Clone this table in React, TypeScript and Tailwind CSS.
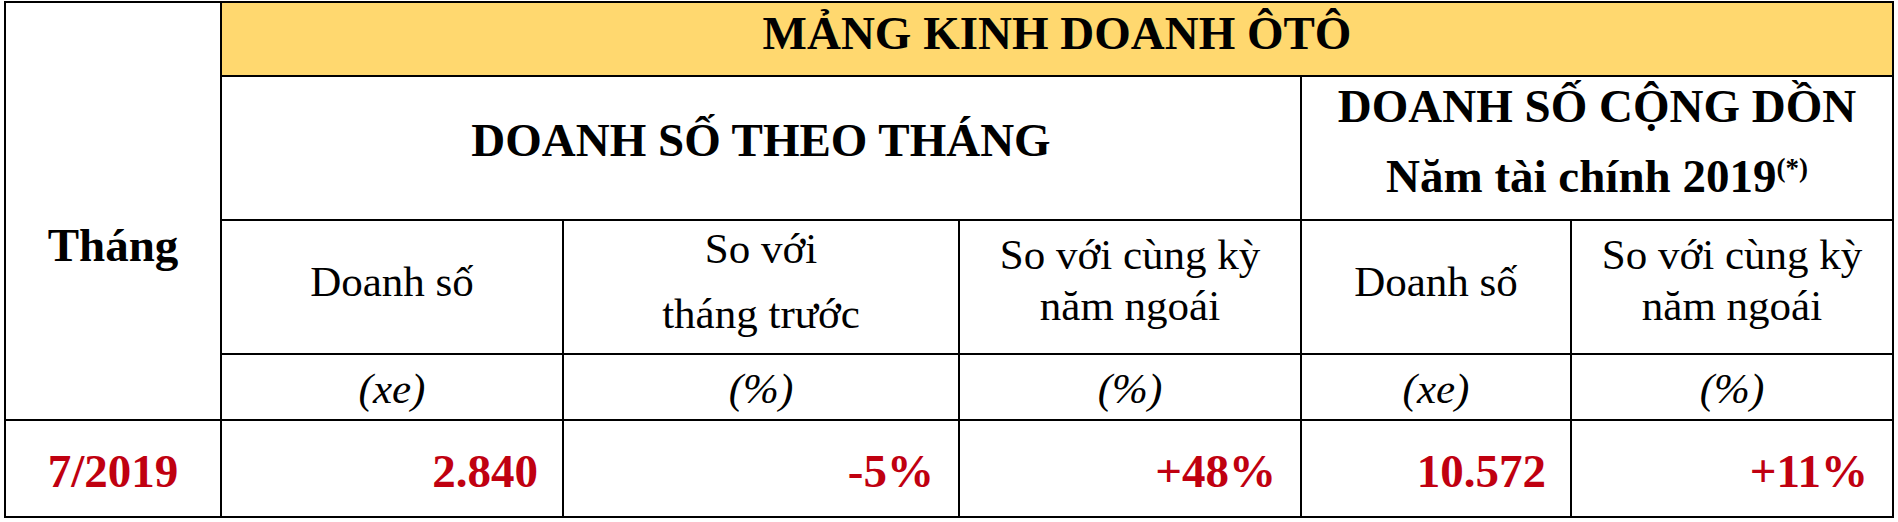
const serif = "font-['Liberation_Serif','Times_New_Roman',serif]"

const cell = "bg-white flex flex-col items-center"

export default function App() {
  return (
    <div className={`min-h-screen bg-white pt-[1px] pl-[4px] text-black ${serif}`}>
      <div className="grid w-fit grid-cols-[214px_340px_394px_340px_268px_320px] grid-rows-[72px_142px_132px_64px_95px] gap-[2px] bg-black p-[2px]">
        {/* Tháng */}
        <div className={`${cell} row-span-4 pt-[219px]`}>
          <div className="text-[47px] font-bold leading-none">Tháng</div>
        </div>

        {/* Title */}
        <div className="col-span-5 flex flex-col items-center bg-[#ffd86f] pt-[7px]">
          <div className="text-[47px] font-bold leading-none">MẢNG KINH DOANH ÔTÔ</div>
        </div>

        {/* Section headers */}
        <div className={`${cell} col-span-3 pt-[40px]`}>
          <div className="text-[47px] font-bold leading-none">DOANH SỐ THEO THÁNG</div>
        </div>
        <div className={`${cell} col-span-2 pt-[6px]`}>
          <div className="text-[47px] font-bold leading-none">DOANH SỐ CỘNG DỒN</div>
          <div className="mt-[23px] text-[47px] font-bold leading-none">
            Năm tài chính 2019
            <span className="relative -top-[15px] text-[27px]">(*)</span>
          </div>
        </div>

        {/* Column labels */}
        <div className={`${cell} pt-[39px]`}>
          <div className="text-[43px] leading-none">Doanh số</div>
        </div>
        <div className={`${cell} pt-[6px]`}>
          <div className="text-[43px] leading-none">So với</div>
          <div className="mt-[22px] text-[43px] leading-none">tháng trước</div>
        </div>
        <div className={`${cell} pt-[12px]`}>
          <div className="text-[43px] leading-none">So với cùng kỳ</div>
          <div className="mt-[8px] text-[43px] leading-none">năm ngoái</div>
        </div>
        <div className={`${cell} pt-[39px]`}>
          <div className="text-[43px] leading-none">Doanh số</div>
        </div>
        <div className={`${cell} pt-[12px]`}>
          <div className="text-[43px] leading-none">So với cùng kỳ</div>
          <div className="mt-[8px] text-[43px] leading-none">năm ngoái</div>
        </div>

        {/* Units */}
        {["(xe)", "(%)", "(%)", "(xe)", "(%)"].map((u, i) => (
          <div key={i} className={`${cell} pt-[12px]`}>
            <div className="text-[43px] italic leading-none">{u}</div>
          </div>
        ))}

        {/* Data row */}
        <div className={`${cell} pt-[27px]`}>
          <div className="text-[47px] font-bold leading-none text-[#c00010]">7/2019</div>
        </div>
        {["2.840", "-5%", "+48%", "10.572", "+11%"].map((v, i) => (
          <div key={i} className="flex flex-col items-end bg-white pt-[27px] pr-[24px]">
            <div className="text-[47px] font-bold leading-none text-[#c00010]">{v}</div>
          </div>
        ))}
      </div>
    </div>
  )
}
